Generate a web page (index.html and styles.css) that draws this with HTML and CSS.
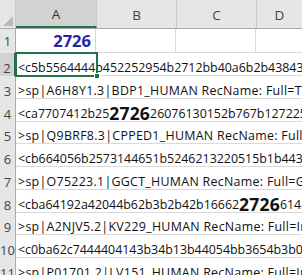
FILE: index.html
```html
<!DOCTYPE html>
<html>
<head>
<meta charset="utf-8">
<link rel="stylesheet" href="styles.css">
</head>
<body>
<div class="sheet">
  <div class="hdr">
    <div class="corner"><svg width="15" height="27" viewBox="0 0 15 27"><polygon points="3,26 13,26 13,16" fill="#b9b9b9"/></svg></div>
    <div class="colh sel">A</div>
    <div class="colh">B</div>
    <div class="colh">C</div>
    <div class="colh last">D</div>
  </div>
  <div class="row r1">
    <div class="rowh">1</div>
    <div class="cell num">2726</div>
    <div class="cell"></div>
    <div class="cell"></div>
    <div class="cell last"></div>
  </div>
  <div class="row h23">
    <div class="rowh sel">2</div>
    <div class="txt">&lt;c5b5564444b452252954b2712bb40a6b2b43843b4b</div>
  </div>
  <div class="row h23">
    <div class="rowh">3</div>
    <div class="txt sp">&gt;sp|A6H8Y1.3|BDP1_HUMAN RecName: Full=Transcription</div>
  </div>
  <div class="row h23">
    <div class="rowh">4</div>
    <div class="txt">&lt;ca7707412b25<b>2726</b>26076130152b767b127225b4</div>
  </div>
  <div class="row h22">
    <div class="rowh">5</div>
    <div class="txt sp">&gt;sp|Q9BRF8.3|CPPED1_HUMAN RecName: Full=Serine</div>
  </div>
  <div class="row h23">
    <div class="rowh">6</div>
    <div class="txt">&lt;cb664056b2573144651b5246213220515b1b44383b4</div>
  </div>
  <div class="row h23">
    <div class="rowh">7</div>
    <div class="txt sp">&gt;sp|O75223.1|GGCT_HUMAN RecName: Full=Gamma</div>
  </div>
  <div class="row h23">
    <div class="rowh">8</div>
    <div class="txt">&lt;cba64192a42044b62b3b2b42b16662<b>2726</b>6143b4</div>
  </div>
  <div class="row h22">
    <div class="rowh">9</div>
    <div class="txt sp">&gt;sp|A2NJV5.2|KV229_HUMAN RecName: Full=Immuno</div>
  </div>
  <div class="row h23">
    <div class="rowh">10</div>
    <div class="txt">&lt;c0ba62c7444404143b34b13b44054bb3654b3b0b4</div>
  </div>
  <div class="row h23">
    <div class="rowh">11</div>
    <div class="txt sp">&gt;sp|P01701.2|LV151_HUMAN RecName: Full=Immuno</div>
  </div>
  <div class="selbox"><span class="handle"></span></div>
</div>
</body>
</html>
```
FILE: styles.css
```css
* { box-sizing: border-box; }
html, body { margin: 0; padding: 0; background: #fff; }
body { width: 302px; height: 275px; overflow: hidden; font-family: "Open Sans", "Liberation Sans", sans-serif; }
.sheet { position: relative; width: 302px; }
.hdr { display: flex; height: 29px; background: #e6e6e6; border-bottom: 1px solid #ababab; }
.corner { width: 16px; flex: none; border-right: 1px solid #c8c8c8; }
.corner svg { display: block; }
.colh { width: 81px; flex: none; border-right: 1px solid #c8c8c8; display: flex; align-items: center; justify-content: center; font-size: 13.5px; color: #444; padding-top: 2px; }
.colh + .colh { width: 80px; }
.colh.sel { width: 81px; background: #d2d2d2; border-bottom: 2px solid #217346; color: #333; }
.colh.last { flex: 1; border-right: 0; }
.row { display: flex; border-bottom: 1px solid #d9d9d9; }
.r1 { height: 24px; }
.h23 { height: 23px; }
.h22 { height: 22px; }
.rowh { width: 16px; flex: none; background: #e6e6e6; border-right: 1px solid #ababab; font-size: 13px; color: #444; display: flex; align-items: flex-end; justify-content: center; line-height: 15px; padding-bottom: 0; margin-bottom: -1px; }
.r1 .rowh { align-items: center; padding-bottom: 0; }
.rowh.sel { background: #d2d2d2; border-right: 2px solid #217346; }
.cell { width: 80px; flex: none; border-right: 1px solid #d9d9d9; }
.cell.num { width: 80px; display: flex; align-items: flex-end; justify-content: flex-end; padding: 0 4px 0 0; font-weight: 700; font-size: 16.5px; line-height: 22px; color: #2424a6; }
.cell.last { flex: 1; border-right: 0; }
.txt { flex: 1; white-space: nowrap; overflow: hidden; font-size: 12.4px; color: #111; display: flex; align-items: flex-end; padding: 0 0 0 2px; line-height: 15px; }
.txt.sp { letter-spacing: 0.3px; }
.txt b { font-size: 17.5px; line-height: 15px; font-weight: 700; letter-spacing: 0.2px; }
.selbox { position: absolute; left: 15px; top: 52px; width: 83px; height: 25px; border: 2px solid #217346; }
.handle { position: absolute; right: -4px; bottom: -4px; width: 6px; height: 6px; background: #217346; border: 1px solid #fff; }
```
